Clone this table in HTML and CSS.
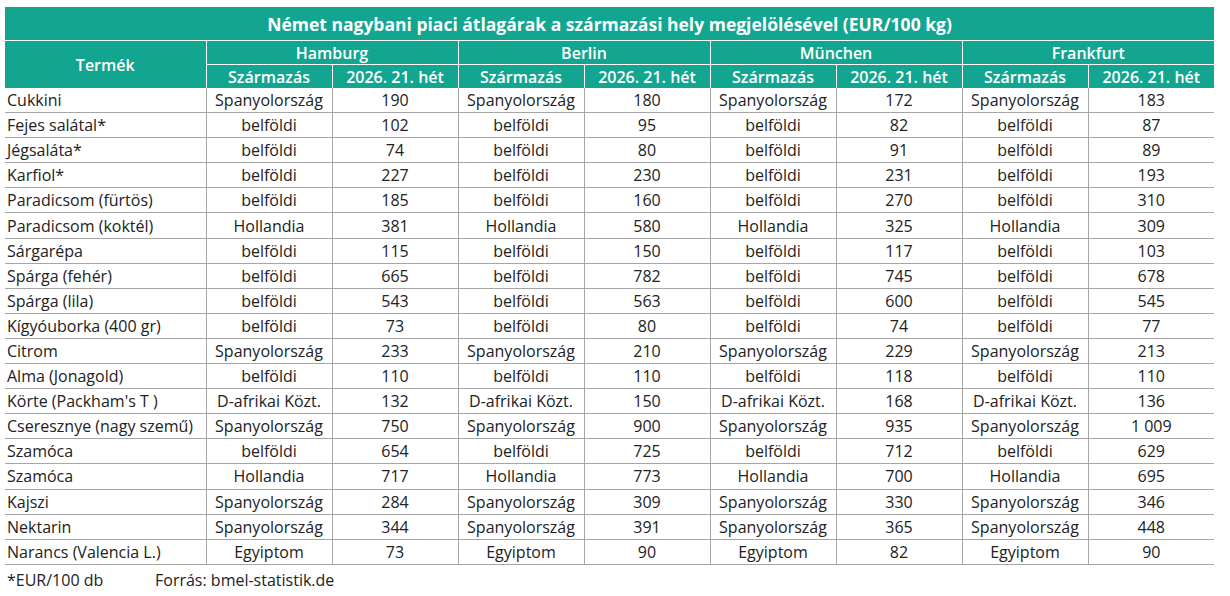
FILE: index.html
```html
<!DOCTYPE html>
<html lang="hu">
<head>
<meta charset="utf-8">
<title>Német nagybani piaci átlagárak</title>
<link rel="stylesheet" href="styles.css">
</head>
<body>
<table class="prices">
  <colgroup>
    <col class="c-prod">
    <col class="c-col"><col class="c-col"><col class="c-col"><col class="c-col">
    <col class="c-col"><col class="c-col"><col class="c-col"><col class="c-col">
  </colgroup>
  <thead>
    <tr class="r-title"><th colspan="9">Német nagybani piaci átlagárak a származási hely megjelölésével (EUR/100 kg)</th></tr>
    <tr class="r-city">
      <th rowspan="2" class="h-prod">Termék</th>
      <th colspan="2">Hamburg</th>
      <th colspan="2">Berlin</th>
      <th colspan="2">München</th>
      <th colspan="2">Frankfurt</th>
    </tr>
    <tr class="r-sub">
      <th>Származás</th><th>2026. 21. hét</th>
      <th>Származás</th><th>2026. 21. hét</th>
      <th>Származás</th><th>2026. 21. hét</th>
      <th>Származás</th><th>2026. 21. hét</th>
    </tr>
  </thead>
  <tbody>
    <tr><td>Cukkini</td><td>Spanyolország</td><td>190</td><td>Spanyolország</td><td>180</td><td>Spanyolország</td><td>172</td><td>Spanyolország</td><td>183</td></tr>
    <tr><td>Fejes salátal*</td><td>belföldi</td><td>102</td><td>belföldi</td><td>95</td><td>belföldi</td><td>82</td><td>belföldi</td><td>87</td></tr>
    <tr><td>Jégsaláta*</td><td>belföldi</td><td>74</td><td>belföldi</td><td>80</td><td>belföldi</td><td>91</td><td>belföldi</td><td>89</td></tr>
    <tr><td>Karfiol*</td><td>belföldi</td><td>227</td><td>belföldi</td><td>230</td><td>belföldi</td><td>231</td><td>belföldi</td><td>193</td></tr>
    <tr><td>Paradicsom (fürtös)</td><td>belföldi</td><td>185</td><td>belföldi</td><td>160</td><td>belföldi</td><td>270</td><td>belföldi</td><td>310</td></tr>
    <tr><td>Paradicsom (koktél)</td><td>Hollandia</td><td>381</td><td>Hollandia</td><td>580</td><td>Hollandia</td><td>325</td><td>Hollandia</td><td>309</td></tr>
    <tr><td>Sárgarépa</td><td>belföldi</td><td>115</td><td>belföldi</td><td>150</td><td>belföldi</td><td>117</td><td>belföldi</td><td>103</td></tr>
    <tr><td>Spárga (fehér)</td><td>belföldi</td><td>665</td><td>belföldi</td><td>782</td><td>belföldi</td><td>745</td><td>belföldi</td><td>678</td></tr>
    <tr><td>Spárga (lila)</td><td>belföldi</td><td>543</td><td>belföldi</td><td>563</td><td>belföldi</td><td>600</td><td>belföldi</td><td>545</td></tr>
    <tr><td>Kígyóuborka (400 gr)</td><td>belföldi</td><td>73</td><td>belföldi</td><td>80</td><td>belföldi</td><td>74</td><td>belföldi</td><td>77</td></tr>
    <tr><td>Citrom</td><td>Spanyolország</td><td>233</td><td>Spanyolország</td><td>210</td><td>Spanyolország</td><td>229</td><td>Spanyolország</td><td>213</td></tr>
    <tr><td>Alma (Jonagold)</td><td>belföldi</td><td>110</td><td>belföldi</td><td>110</td><td>belföldi</td><td>118</td><td>belföldi</td><td>110</td></tr>
    <tr><td>Körte (Packham's T )</td><td>D-afrikai Közt.</td><td>132</td><td>D-afrikai Közt.</td><td>150</td><td>D-afrikai Közt.</td><td>168</td><td>D-afrikai Közt.</td><td>136</td></tr>
    <tr><td>Cseresznye (nagy szemű)</td><td>Spanyolország</td><td>750</td><td>Spanyolország</td><td>900</td><td>Spanyolország</td><td>935</td><td>Spanyolország</td><td>1 009</td></tr>
    <tr><td>Szamóca</td><td>belföldi</td><td>654</td><td>belföldi</td><td>725</td><td>belföldi</td><td>712</td><td>belföldi</td><td>629</td></tr>
    <tr><td>Szamóca</td><td>Hollandia</td><td>717</td><td>Hollandia</td><td>773</td><td>Hollandia</td><td>700</td><td>Hollandia</td><td>695</td></tr>
    <tr><td>Kajszi</td><td>Spanyolország</td><td>284</td><td>Spanyolország</td><td>309</td><td>Spanyolország</td><td>330</td><td>Spanyolország</td><td>346</td></tr>
    <tr><td>Nektarin</td><td>Spanyolország</td><td>344</td><td>Spanyolország</td><td>391</td><td>Spanyolország</td><td>365</td><td>Spanyolország</td><td>448</td></tr>
    <tr><td>Narancs (Valencia L.)</td><td>Egyiptom</td><td>73</td><td>Egyiptom</td><td>90</td><td>Egyiptom</td><td>82</td><td>Egyiptom</td><td>90</td></tr>
  </tbody>
</table>
<div class="notes">
  <span class="note-unit">*EUR/100 db</span>
  <span class="note-src">Forrás: bmel-statistik.de</span>
</div>
</body>
</html>
```

FILE: styles.css
```css
html, body {
  margin: 0;
  padding: 0;
  background: #ffffff;
}
body {
  padding: 7px 0 0 5px;
  font-family: "Open Sans", "Noto Sans", sans-serif;
  color: #222222;
}
.prices {
  border-collapse: collapse;
  table-layout: fixed;
  width: 1209px;
  font-size: 16px;
}
.c-prod { width: 201px; }
.c-col { width: 126px; }

.prices th {
  background: #12a690;
  color: #ffffff;
  font-weight: 600;
  padding: 0;
  line-height: 22px;
  border: 1px solid #ffffff;
  text-align: center;
}
.prices thead tr:first-child th { border-top: 0; }
.prices thead th:first-child { border-left: 0; }
.prices thead tr.r-sub th:last-child,
.prices thead tr.r-city th:last-child,
.prices thead tr.r-title th { border-right: 0; }
.prices thead tr.r-sub th { border-bottom: 0; }
.prices thead th.h-prod { border-bottom: 0; }

.r-title th {
  height: 33px;
  font-size: 17.5px;
  font-weight: 700;
}
.r-city th { height: 23px; }
.r-sub th { height: 23px; }

.prices td {
  height: 24.1px;
  padding: 0;
  line-height: 22px;
  text-align: center;
  border: 1px solid #a6a6a6;
  border-top: 0;
  white-space: nowrap;
}
.prices td:first-child {
  text-align: left;
  padding-left: 2px;
  border-left: 0;
}
.prices td:last-child { border-right: 0; }

.notes {
  display: flex;
  font-size: 16px;
  line-height: 22px;
  padding: 4px 0 0 2px;
}
.note-unit { width: 148px; }
```
